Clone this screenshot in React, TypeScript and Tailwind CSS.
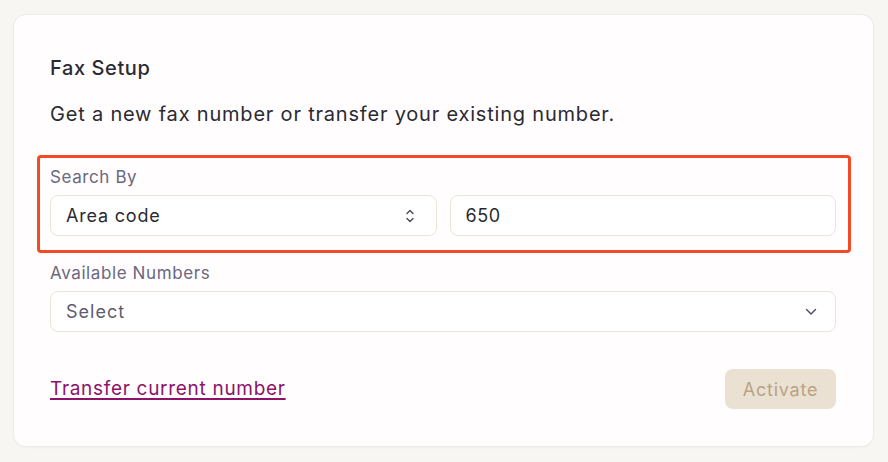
import React from "react";

export default function App() {
  return (
    <div
      className="w-[888px] h-[462px] bg-[#f7f6f2] pt-[15px] pl-[14px] pr-[14px]"
      style={{ fontFamily: "Inter, 'Noto Sans', sans-serif" }}
    >
      <div className="w-[859px] h-[431px] bg-[#fffdfd] rounded-[12px] shadow-[0_0_0_1px_#ecebe6,0_1px_3px_rgba(0,0,0,0.06)] pl-[36px] pr-[37px] pt-[40px]">
        <h1 className="text-[20px] leading-[26px] font-medium text-[#2b2a33] tracking-[0.6px]">Fax Setup</h1>
        <p className="mt-[20px] text-[20px] leading-[26px] text-[#2b2a33] tracking-[0.8px]">
          Get a new fax number or transfer your existing number.
        </p>

        <div className="relative mt-[40px]">
          <div className="pointer-events-none absolute -left-[13px] -right-[15px] -top-[12px] h-[98px] rounded-[4px] border-[3px] border-[#f24a25]" />
          <label className="block text-[17px] leading-[20px] text-[#6a6880] tracking-[0.6px]">Search By</label>
          <div className="mt-[8px] grid grid-cols-2 gap-[13px]">
            <div className="h-[41px] rounded-[8px] border border-[#ece4d7] bg-white flex items-center justify-between pl-[15px] pr-[21px]">
              <span className="text-[18px] text-[#2b2a33] tracking-[0.8px]">Area code</span>
              <svg width="10" height="16" viewBox="0 0 10 16" fill="none" stroke="#4a4860" strokeWidth="1.4" strokeLinecap="round" strokeLinejoin="round">
                <path d="M2 5.5 L5 2.5 L8 5.5" />
                <path d="M2 10.5 L5 13.5 L8 10.5" />
              </svg>
            </div>
            <div className="h-[41px] rounded-[8px] border border-[#ece4d7] bg-white flex items-center pl-[15px]">
              <span className="text-[18px] text-[#2b2a33] tracking-[0.6px]">650</span>
            </div>
          </div>
        </div>

        <label className="mt-[27px] block text-[17px] leading-[20px] text-[#6a6880] tracking-[0.6px]">Available Numbers</label>
        <div className="mt-[8px] h-[41px] rounded-[8px] border border-[#ece4d7] bg-white flex items-center justify-between pl-[15px] pr-[18px]">
          <span className="text-[18px] text-[#5f5c72] tracking-[1px]">Select</span>
          <svg width="12" height="8" viewBox="0 0 12 8" fill="none" stroke="#4a4860" strokeWidth="1.4" strokeLinecap="round" strokeLinejoin="round">
            <path d="M1.5 1.5 L6 6 L10.5 1.5" />
          </svg>
        </div>

        <div className="mt-[37px] flex items-center justify-between">
          <a className="text-[19px] leading-[24px] text-[#8c1369] tracking-[0.7px] underline underline-offset-[3px] decoration-[1.5px]">Transfer current number</a>
          <button className="h-[40px] w-[111px] rounded-[8px] bg-[#ebe1d3] text-[18px] text-[#b9a285] tracking-[0.75px]">Activate</button>
        </div>
      </div>
    </div>
  );
}
